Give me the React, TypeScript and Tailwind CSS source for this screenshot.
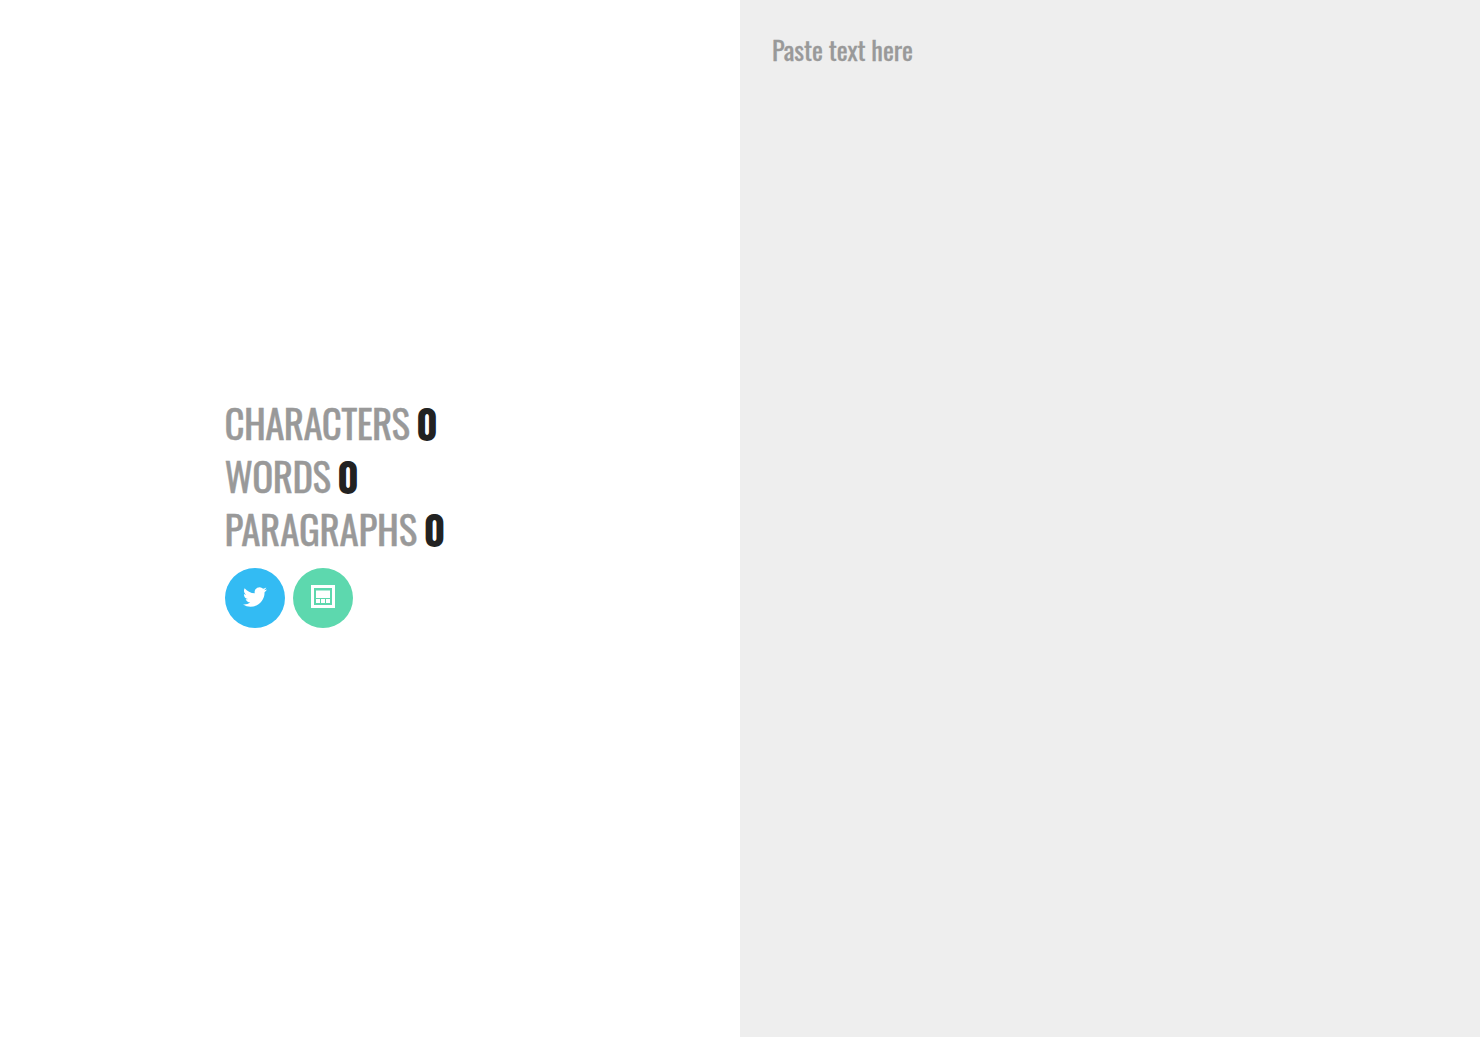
import React from "react";

interface CounterProps {
  label: string;
  value: number;
  className?: string;
}

const Counter: React.FC<CounterProps> = ({ label, value, className }) => (
  <p className="flex h-[53px] items-center gap-[6.5px] whitespace-nowrap uppercase leading-none">
    <span
      className={`text-[39px] text-[#999] [-webkit-text-stroke:0.4px_#999] ${className}`}
    >
      {label}
    </span>
    <strong className="text-[40px] font-bold text-[#222]">{value}</strong>
  </p>
);

const TwitterIcon = () => (
  <svg viewBox="0 0 24 24" className="h-6 w-6" fill="currentColor">
    <path d="M23.953 4.57a10 10 0 01-2.825.775 4.958 4.958 0 002.163-2.723c-.951.555-2.005.959-3.127 1.184a4.92 4.92 0 00-8.384 4.482C7.69 8.095 4.067 6.13 1.64 3.162a4.822 4.822 0 00-.666 2.475c0 1.71.87 3.213 2.188 4.096a4.904 4.904 0 01-2.228-.616v.06a4.923 4.923 0 003.946 4.827 4.996 4.996 0 01-2.212.085 4.936 4.936 0 004.604 3.417 9.867 9.867 0 01-6.102 2.105c-.39 0-.779-.023-1.17-.067a13.995 13.995 0 007.557 2.209c9.053 0 13.998-7.496 13.998-13.985 0-.21 0-.42-.015-.63A9.935 9.935 0 0024 4.59z" />
  </svg>
);

const LayoutIcon = () => (
  <svg viewBox="0 0 24 23" className="h-[23px] w-6" fill="currentColor">
    <path fillRule="evenodd" d="M0 0h24v23H0zM3 3v17h18V3z" />
    <path d="M5 5.6h14V13H5zM5 14h4v4H5zM10 14h4v4h-4zM15 14h4v4h-4z" />
  </svg>
);

export default function App() {
  const [text, setText] = React.useState("");

  const characters = text.length;
  const words = text.split(/\s+/).filter(Boolean).length;
  const paragraphs = text.split(/\n+/).filter((p) => p.trim()).length;

  return (
    <main className="flex h-screen bg-white font-['Oswald','Roboto',sans-serif]">
      <section className="flex w-1/2 flex-col justify-center pb-[13px] pl-[225px]">
        <div className="-ml-[0.6px]">
          <Counter
            label="Characters"
            value={characters}
            className="tracking-[-0.6px]"
          />
          <Counter label="Words" value={words} className="tracking-[-0.5px]" />
          <Counter
            label="Paragraphs"
            value={paragraphs}
            className="tracking-[-0.22px]"
          />
        </div>

        <div className="mt-[13px] flex gap-2">
          <a
            href="#twitter"
            aria-label="Twitter"
            className="flex h-15 w-15 items-center justify-center rounded-full bg-[#33bbf3] pb-[3px] text-white"
          >
            <TwitterIcon />
          </a>
          <a
            href="#layout"
            aria-label="Layout"
            className="flex h-15 w-15 items-center justify-center rounded-full bg-[#5dd8ae] pb-[3px] text-white"
          >
            <LayoutIcon />
          </a>
        </div>
      </section>

      <textarea
        className="w-1/2 resize-none bg-[#eee] px-8 pt-[31px] text-[26px] leading-[38px] tracking-[-0.05px] text-[#222] outline-none placeholder:text-[#999] placeholder:[-webkit-text-stroke:0.3px_#999]"
        placeholder="Paste text here"
        value={text}
        onChange={(e) => setText(e.target.value)}
      />
    </main>
  );
}
